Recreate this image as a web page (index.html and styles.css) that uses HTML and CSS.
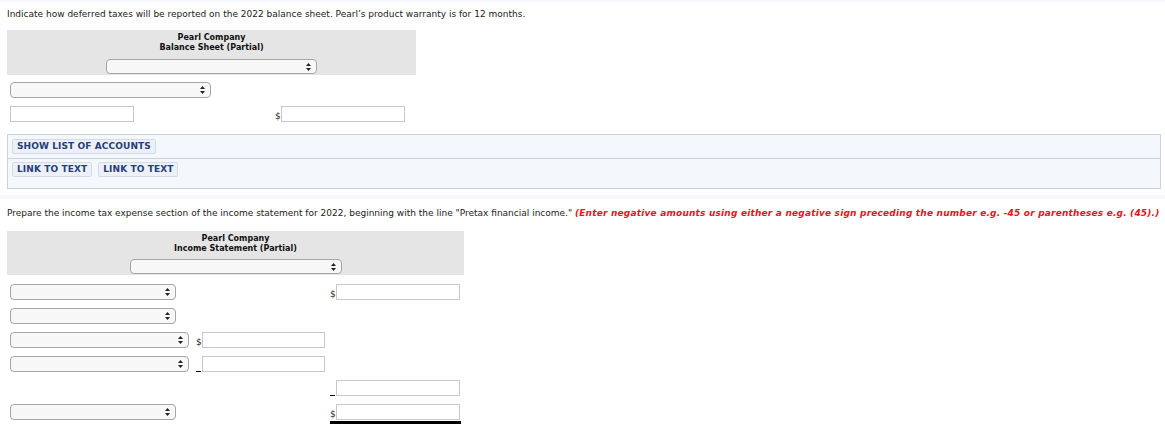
FILE: index.html
```html
<!DOCTYPE html>
<html>
<head>
<meta charset="utf-8">
<link rel="stylesheet" href="styles.css">
</head>
<body>
<div class="band"></div>
<p class="instr">Indicate how deferred taxes will be reported on the 2022 balance sheet. Pearl’s product warranty is for 12 months.</p>

<div class="sheet bs">
  <div class="head">
    <div class="title">Pearl Company</div>
    <div class="title">Balance Sheet (Partial)</div>
    <div class="sel w210"><svg viewBox="0 0 5 8"><path d="M2.5 0L5 3H0Z M2.5 8L5 5H0Z"/></svg></div>
  </div>
  <div class="row r1"><div class="sel w201"><svg viewBox="0 0 5 8"><path d="M2.5 0L5 3H0Z M2.5 8L5 5H0Z"/></svg></div></div>
  <div class="row r2">
    <div class="inp w124"></div>
    <div class="amt"><span class="cur">$</span><div class="inp w124"></div></div>
  </div>
</div>

<div class="panel">
  <div class="prow"><span class="btn">SHOW LIST OF ACCOUNTS</span></div>
  <div class="prow second"><span class="btn">LINK TO TEXT</span><span class="btn">LINK TO TEXT</span></div>
</div>

<div class="band band2"></div>
<p class="instr instr2">Prepare the income tax expense section of the income statement for 2022, beginning with the line "Pretax financial income." <em class="warn">(Enter negative amounts using either a negative sign preceding the number e.g. -45 or parentheses e.g. (45).)</em></p>

<div class="sheet is">
  <div class="head">
    <div class="title">Pearl Company</div>
    <div class="title">Income Statement (Partial)</div>
    <div class="sel w212"><svg viewBox="0 0 5 8"><path d="M2.5 0L5 3H0Z M2.5 8L5 5H0Z"/></svg></div>
  </div>
  <div class="grid">
    <div class="c1"><div class="sel w166"><svg viewBox="0 0 5 8"><path d="M2.5 0L5 3H0Z M2.5 8L5 5H0Z"/></svg></div></div>
    <div class="c2"></div>
    <div class="c3"><span class="cur">$</span><div class="inp w124"></div></div>

    <div class="c1"><div class="sel w166"><svg viewBox="0 0 5 8"><path d="M2.5 0L5 3H0Z M2.5 8L5 5H0Z"/></svg></div></div>
    <div class="c2"></div>
    <div class="c3"></div>

    <div class="c1"><div class="sel w179"><svg viewBox="0 0 5 8"><path d="M2.5 0L5 3H0Z M2.5 8L5 5H0Z"/></svg></div></div>
    <div class="c2"><span class="cur">$</span><div class="inp w123"></div></div>
    <div class="c3"></div>

    <div class="c1"><div class="sel w179"><svg viewBox="0 0 5 8"><path d="M2.5 0L5 3H0Z M2.5 8L5 5H0Z"/></svg></div></div>
    <div class="c2"><span class="cur under">&nbsp;</span><div class="inp w123"></div></div>
    <div class="c3"></div>

    <div class="c1"></div>
    <div class="c2"></div>
    <div class="c3"><span class="cur under">&nbsp;</span><div class="inp w124"></div></div>

    <div class="c1"><div class="sel w166"><svg viewBox="0 0 5 8"><path d="M2.5 0L5 3H0Z M2.5 8L5 5H0Z"/></svg></div></div>
    <div class="c2"></div>
    <div class="c3 total"><span class="cur">$</span><div class="inp w124"></div></div>
  </div>
</div>
</body>
</html>
```
FILE: styles.css
```css
html, body { margin: 0; padding: 0; background: #fff; }
body {
  font-family: "DejaVu Sans", Verdana, sans-serif;
  font-size: 9px;
  color: #222;
  width: 1165px;
}
.band { height: 2px; background: #f4f7fb; }
.band2 { height: 4px; margin-top: 6px; }
.instr { margin: 0; padding: 7px 0 0 7px; line-height: 11px; height: 11px; white-space: nowrap; }
.instr2 { padding-top: 9px; }
.warn { color: #e8141c; font-weight: bold; font-style: italic; letter-spacing: 0.19px; }

.sheet { margin-left: 7px; }
.head {
  background: #e5e5e5;
  display: flex;
  flex-direction: column;
  align-items: center;
  padding-top: 3px;
  height: 42px;
}
.bs .head { width: 409px; margin-top: 10px; }
.is .head { width: 457px; margin-top: 12px; height: 41px; }
.title { font-weight: bold; font-size: 8px; line-height: 10px; color: #111; }
.head .sel { margin-top: 6px; height: 15px; }
.is .head .sel { margin-top: 5px; }

.sel {
  position: relative;
  border: 1px solid #a6a6a6;
  border-radius: 4px;
  background: #f7f7f7;
  box-sizing: border-box;
  height: 16px;
}
.sel svg {
  position: absolute;
  right: 5px;
  top: 3px;
  width: 5px;
  height: 8px;
  fill: #222;
}
.w210 { width: 211px; }
.w212 { width: 212px; }
.w201 { width: 201px; }
.w166 { width: 166px; }
.w179 { width: 179px; }

.inp {
  height: 16px;
  border: 1px solid #c8c8c8;
  box-sizing: border-box;
  background: #fff;
}
.w124 { width: 124px; }
.w123 { width: 123px; }

.row { display: flex; align-items: flex-end; padding-left: 3px; }
.r1 { margin-top: 7px; height: 16px; }
.r2 { margin-top: 8px; }
.amt { display: flex; align-items: flex-end; margin-left: 141px; }
.cur { font-size: 9px; line-height: 10px; width: 6px; color: #222; padding-bottom: 1px; }
.cur.under { border-bottom: 1px solid #000; width: 5px; margin-right: 1px; padding-bottom: 0; }

.panel {
  margin: 12px 4px 0 7px;
  border: 1px solid #c9d3df;
  background: #f4f8fc;
  height: 55px;
  box-sizing: border-box;
}
.prow { padding: 4px 4px 4px 4px; display: flex; gap: 6px; }
.prow.second { border-top: 1px solid #c9d3df; padding-top: 3px; }
.btn {
  display: inline-block;
  font-weight: bold;
  font-size: 9px;
  color: #253e7c;
  background: #edf1f7;
  border: 1px solid #d3dbe6;
  border-radius: 2px;
  padding: 2px 4px 2px 4px;
  line-height: 9px;
  letter-spacing: 0.1px;
}

.grid {
  display: grid;
  grid-template-columns: 183px 137px 130px;
  grid-auto-rows: 24px;
  padding-left: 3px;
  margin-top: 9px;
}
.c1, .c2, .c3 { display: flex; align-items: flex-start; }
.c2 { padding-left: 3px; }
.c2 .cur, .c3 .cur { align-self: flex-end; margin-bottom: 8px; }
.total { position: relative; }
.total::after {
  content: "";
  position: absolute;
  left: 0;
  top: 17px;
  width: 131px;
  height: 3px;
  background: #000;
}
```
